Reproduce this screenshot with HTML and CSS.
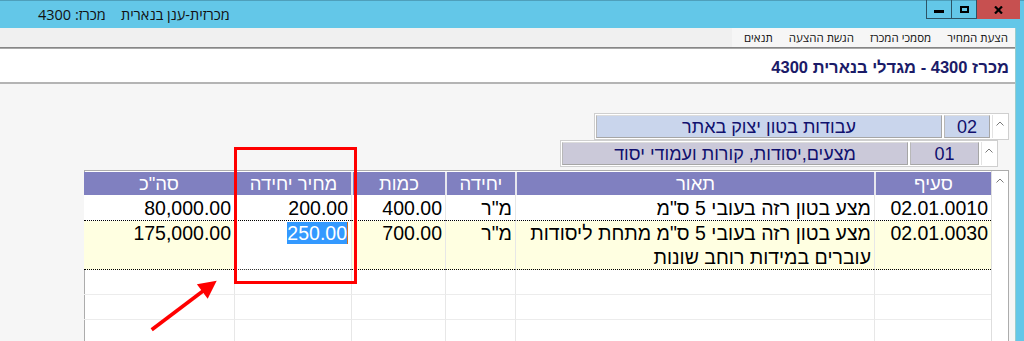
FILE: index.html
```html
<!DOCTYPE html>
<html lang="he">
<head>
<meta charset="utf-8">
<title>מכרזית-ענן בנארית</title>
<link rel="stylesheet" href="styles.css">
</head>
<body>
<div class="window">
  <header class="titlebar">
    <div class="title" dir="rtl">מכרזית-ענן בנארית&nbsp;&nbsp;&nbsp; מכרז: 4300</div>
    <div class="caption">
      <span class="cap-btn cap-min"><i class="glyph-min"></i></span>
      <span class="cap-btn cap-max"><i class="glyph-max"></i></span>
      <span class="cap-btn cap-close">
        <svg width="9" height="8" viewBox="0 0 9 8"><path d="M1 0.5 L8 7.5 M8 0.5 L1 7.5" stroke="#000" stroke-width="2.2"/></svg>
      </span>
    </div>
  </header>
  <div class="frame">
    <div class="client" dir="rtl">
      <nav class="menubar">
        <ul class="menu">
          <li>הצעת המחיר</li>
          <li>מסמכי המכרז</li>
          <li>הגשת ההצעה</li>
          <li>תנאים</li>
        </ul>
      </nav>
      <div class="tender-header">מכרז 4300 - מגדלי בנארית 4300</div>
      <main class="workspace">
        <div class="chapter chapter-main">
          <div class="vscroll"><svg width="8" height="5" viewBox="0 0 8 5"><path d="M0.5 4.5 L4 1 L7.5 4.5" fill="none" stroke="#7a7a7a" stroke-width="1"/></svg></div>
          <div class="ch-num num-main">02</div>
          <div class="ch-desc desc-main">עבודות בטון יצוק באתר</div>
        </div>
        <div class="chapter chapter-sub">
          <div class="vscroll"><svg width="8" height="5" viewBox="0 0 8 5"><path d="M0.5 4.5 L4 1 L7.5 4.5" fill="none" stroke="#7a7a7a" stroke-width="1"/></svg></div>
          <div class="ch-num num-sub">01</div>
          <div class="ch-desc desc-sub">מצעים,יסודות, קורות ועמודי יסוד</div>
        </div>
        <div class="grid-wrap">
          <div class="vscroll grid-scroll"><svg width="8" height="5" viewBox="0 0 8 5"><path d="M0.5 4.5 L4 1 L7.5 4.5" fill="none" stroke="#7a7a7a" stroke-width="1"/></svg></div>
          <table class="grid">
            <colgroup>
              <col class="c-item"><col class="c-desc"><col class="c-unit"><col class="c-qty"><col class="c-price"><col class="c-total">
            </colgroup>
            <thead>
              <tr><th>סעיף</th><th>תאור</th><th>יחידה</th><th>כמות</th><th>מחיר יחידה</th><th>סה"כ</th></tr>
            </thead>
            <tbody>
              <tr class="row row-a">
                <td>02.01.0010</td>
                <td>מצע בטון רזה בעובי 5 ס"מ</td>
                <td>מ"ר</td>
                <td>400.00</td>
                <td>200.00</td>
                <td>80,000.00</td>
              </tr>
              <tr class="row row-b">
                <td>02.01.0030</td>
                <td>מצע בטון רזה בעובי 5 ס"מ מתחת ליסודות<br>עוברים במידות רוחב שונות</td>
                <td>מ"ר</td>
                <td>700.00</td>
                <td class="editing"><span class="sel">250.00</span></td>
                <td>175,000.00</td>
              </tr>
              <tr class="row empty"><td></td><td></td><td></td><td></td><td></td><td></td></tr>
              <tr class="row empty"><td></td><td></td><td></td><td></td><td></td><td></td></tr>
              <tr class="row empty"><td></td><td></td><td></td><td></td><td></td><td></td></tr>
            </tbody>
          </table>
        </div>
        <div class="callout-box"></div>
        <svg class="callout-arrow" width="90" height="71" viewBox="0 0 90 71">
          <line x1="11.7" y1="60.7" x2="63" y2="22" stroke="#f00" stroke-width="3.6"/>
          <polygon points="76.7,11.7 67.7,29.7 56.9,15.3" fill="#f00"/>
        </svg>
      </main>
    </div>
  </div>
</div>
</body>
</html>
```

FILE: styles.css
```css
* { box-sizing: border-box; }

html, body {
  margin: 0;
  padding: 0;
}

body {
  width: 1024px;
  height: 341px;
  overflow: hidden;
  background: #63c7e8;
  font-family: "Liberation Sans", Arial, "DejaVu Sans", sans-serif;
}

.window {
  width: 1024px;
  height: 341px;
  display: flex;
  flex-direction: column;
  background: #63c7e8;
}

/* ---------- title bar ---------- */
.titlebar {
  height: 28px;
  flex: none;
  display: flex;
  align-items: flex-start;
  justify-content: space-between;
  border-top: 1px solid #4e9fbb;
}

.title {
  margin: 5px 0 0 38px;
  font-family: "Open Sans", "Liberation Sans", sans-serif;
  font-size: 14.5px;
  line-height: 18px;
  color: #111;
  white-space: pre;
}

.caption {
  display: flex;
  height: 19px;
  margin: -1px 4px 0 0;
}

.cap-btn {
  display: flex;
  align-items: center;
  justify-content: center;
  height: 19px;
}

.cap-min, .cap-max {
  width: 25px;
  border-left: 1px solid #2d5466;
  border-bottom: 1px solid #2d5466;
}

.cap-close {
  width: 44px;
  background: #c75050;
  border-left: 1px solid #2d5466;
}

.glyph-min {
  display: block;
  width: 10px;
  height: 3px;
  background: #000;
  margin-top: 5px;
}

.glyph-max {
  display: block;
  width: 9px;
  height: 7px;
  border: 2px solid #000;
}

/* ---------- frame / client ---------- */
.frame {
  flex: 1;
  display: flex;
  min-height: 0;
}

.client {
  width: 1016px;
  display: flex;
  flex-direction: column;
  background: #f5f5f5;
  border-right: 1px solid #9cc;
}

.menubar {
  height: 19px;
  background: #f0f0f0;
  flex: none;
}

.menu {
  list-style: none;
  margin: 0;
  padding: 0 7px 0 12px;
  height: 19px;
  display: inline-flex;
  gap: 16px;
  background: #f6f6f6;
  font-family: "Open Sans", "Liberation Sans", sans-serif;
  font-size: 11.5px;
  line-height: 19px;
  color: #111;
}

.tender-header {
  flex: none;
  height: 37px;
  border-top: 1px solid #868686;
  box-shadow: inset 0 1px 0 #a9a9a9;
  border-bottom: 2px solid #b4b4b4;
  background: #fff;
  padding: 10px 6px 0 0;
  font-size: 16.5px;
  line-height: 18px;
  font-weight: bold;
  color: #1b1b68;
}

/* ---------- workspace ---------- */
.workspace {
  position: relative;
  flex: 1;
  min-height: 0;
  overflow: hidden;
  background: #f6f6f6;
  padding-top: 29px;
  display: flex;
  flex-direction: column;
  align-items: flex-start;
}

.chapter {
  display: flex;
  height: 27px;
  border: 1px solid #cfcfcf;
  background: #fff;
  padding: 1px;
  gap: 2px;
  flex: none;
}

.chapter-main {
  width: 415px;
  margin-right: 6px;
}

.chapter-sub {
  width: 438px;
  margin-right: 17px;
}

.vscroll {
  flex: none;
  width: 15px;
  background: #fff;
  border-left: 1px solid #e3e3e3;
  display: flex;
  justify-content: center;
  padding-top: 6px;
}

.ch-num, .ch-desc {
  border: 1px solid #a6a6a6;
  border-top-color: #dcdcdc;
  border-left-color: #b8b8b8;
  font-size: 18px;
  line-height: 22px;
  text-align: center;
  color: #10106e;
  white-space: nowrap;
}

.ch-desc { flex: 1; }

.num-main { width: 46px; }
.num-sub { width: 69px; }

.desc-main, .num-main { background: #c9d5ec; }
.desc-sub, .num-sub { background: #cbc9d9; }

/* ---------- grid ---------- */
.grid-wrap {
  flex: none;
  margin: 3px 6px 0 0;
  width: 925px;
  height: 180px;
  display: flex;
  border: 1px solid #acacac;
  border-bottom: none;
  background: #fff;
  padding-top: 1px;
}

.grid-scroll {
  width: 17px;
  border-left: 1px solid #dedede;
  padding-top: 7px;
  margin-top: -1px;
}

.grid {
  border-collapse: separate;
  border-spacing: 0;
  table-layout: fixed;
  width: 907px;
  align-self: flex-start;
}

.c-item { width: 117px; }
.c-desc { width: 359px; }
.c-unit { width: 70px; }
.c-qty { width: 94px; }
.c-price { width: 117px; }
.c-total { width: 150px; }

.grid th {
  height: 23px;
  padding: 0;
  background: #8080c0;
  color: #fff;
  font-weight: normal;
  font-size: 18.5px;
  line-height: 22px;
  text-align: center;
  border-left: 2px solid #e6e6ee;
}

.grid th:last-child { border-left: none; }

.grid td {
  padding: 0 3px 0 2px;
  vertical-align: top;
  text-align: right;
  font-size: 19.5px;
  line-height: 24px;
  color: #000;
  white-space: nowrap;
  overflow: hidden;
  border-left: 1px solid #e7e7e7;
}

.grid td:last-child { border-left: none; }

.row-a td {
  height: 26px;
  padding-top: 1px;
  background: #fff;
  border-bottom: 1px dotted #000;
}

.row-b td {
  height: 48px;
  background: #ffffe1;
  border-bottom: 1px dotted #000;
}

.row-b td.editing {
  background: #fff;
  border-bottom-color: #333;
}

.sel {
  background: #3399ff;
  color: #fff;
  border-right: 1px solid #d07020;
}

.empty td {
  height: 25px;
  border-bottom: 1px solid #ececec;
}

/* ---------- annotation overlay ---------- */
.callout-box {
  position: absolute;
  left: 234px;
  top: 63px;
  width: 123px;
  height: 137px;
  border: 3px solid #f00;
}

.callout-arrow {
  position: absolute;
  left: 140px;
  top: 185px;
}
```
